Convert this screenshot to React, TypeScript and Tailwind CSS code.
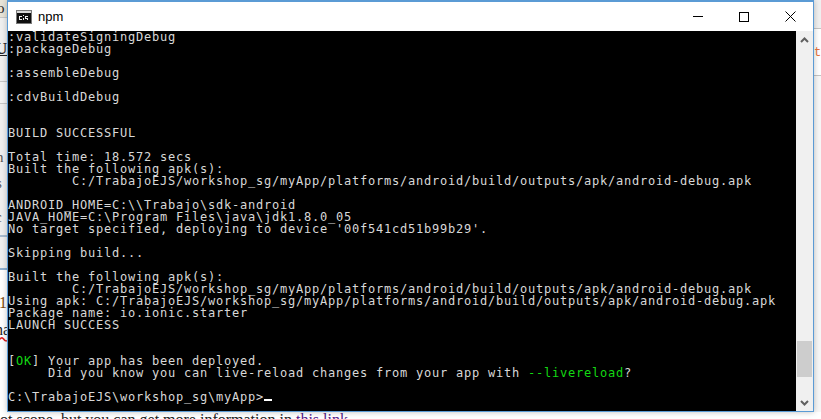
import React from 'react';

const lines: React.ReactNode[] = [
  ':validateSigningDebug',
  ':packageDebug',
  '',
  ':assembleDebug',
  '',
  ':cdvBuildDebug',
  '',
  '',
  'BUILD SUCCESSFUL',
  '',
  'Total time: 18.572 secs',
  'Built the following apk(s):',
  '        C:/TrabajoEJS/workshop_sg/myApp/platforms/android/build/outputs/apk/android-debug.apk',
  '',
  'ANDROID_HOME=C:\\\\Trabajo\\sdk-android',
  'JAVA_HOME=C:\\Program Files\\java\\jdk1.8.0_05',
  "No target specified, deploying to device '00f541cd51b99b29'.",
  '',
  'Skipping build...',
  '',
  'Built the following apk(s):',
  '        C:/TrabajoEJS/workshop_sg/myApp/platforms/android/build/outputs/apk/android-debug.apk',
  'Using apk: C:/TrabajoEJS/workshop_sg/myApp/platforms/android/build/outputs/apk/android-debug.apk',
  'Package name: io.ionic.starter',
  'LAUNCH SUCCESS',
  '',
  '',
  <>[<span className="text-[#13d813]">OK</span>] Your app has been deployed.</>,
  <>
    {'     Did you know you can live-reload changes from your app with '}
    <span className="text-[#13d813]">--livereload</span>?
  </>,
  '',
  <>
    C:\TrabajoEJS\workshop_sg\myApp&gt;
    <span className="inline-block w-2 h-[2px] bg-white align-baseline" />
  </>,
];

const ConsoleIcon = () => (
  <svg width="16" height="14" viewBox="0 0 16 14" shapeRendering="crispEdges">
    <rect x="0" y="0" width="16" height="14" fill="#7a7a7a" />
    <rect x="1" y="1" width="14" height="2" fill="#d8d8d8" />
    <rect x="1" y="3" width="14" height="10" fill="#101010" />
    <path d="M3 6h3v1H3zM3 7h1v2H3zM3 9h3v1H3zM7 8h1v2H7zM7 5h1v1H7zM9 6h3v1H9zM9 7h1v1H9zM9 8h3v1H9zM11 9h1v1h-1z" fill="#f0f0f0" />
  </svg>
);

const LeftEdge = () => (
  <div className="w-[7px] h-full overflow-hidden flex flex-col bg-[#f0f0f0] font-['Liberation_Serif',serif] text-[#222]">
    <div className="h-[17px] bg-[#e8e4d8] text-[15px] leading-[17px] whitespace-nowrap -indent-[3px]">o</div>
    <div className="h-[23px] border-t border-[#c8c8c8]" />
    <div className="h-[18px] text-[17px] leading-[18px] font-bold underline whitespace-nowrap -indent-[5px]">U</div>
    <div className="h-[24px] border-b border-[#c8c8c8]" />
    <div className="h-[22px] border-b border-[#c8c8c8] bg-[#f4f4f4]" />
    <div className="h-[70px] text-[#555] text-[15px] leading-[18px] whitespace-nowrap -indent-[4px] pt-[44px]">n</div>
    <div className="h-[30px] text-[#555] text-[15px] leading-[18px] whitespace-nowrap -indent-[4px]">s</div>
    <div className="h-[33px] text-[#555] text-[15px] leading-[18px] whitespace-nowrap -indent-[5px] pt-[4px] border-b-2 border-[#a9bcd0]">c</div>
    <div className="h-[33px] border-b-2 border-[#8fb0d0]" />
    <div className="h-[48px] bg-white text-[#7a4a10] text-[16px] leading-[18px] whitespace-nowrap pt-[24px] -indent-[1px]">
      1
    </div>
    <div className="flex-1 bg-white text-[#222] text-[16px] leading-[18px] whitespace-nowrap -indent-[5px] pt-[3px]">
      <span className="underline decoration-wavy decoration-[#e02020]">ha</span>
    </div>
  </div>
);

const RightEdge = () => (
  <div className="flex-1 h-full overflow-hidden flex flex-col bg-[#f0f0f0]">
    <div className="h-[29px] border-b border-[#c4c4c4]" />
    <div className="h-[47px] border-b border-[#c4c4c4] bg-white pt-[16px] text-[12px] leading-[16px] whitespace-nowrap font-['Liberation_Mono',monospace] text-[#e8703a]">
      tr
    </div>
    <div className="flex-1 bg-[#f7f7f7]" />
  </div>
);

export default function App() {
  return (
    <div className="relative w-[821px] h-[419px] overflow-hidden flex flex-col bg-white">
      <div className="flex h-[412px]">
        <LeftEdge />
        <div className="w-[807px] h-full flex flex-col border border-t-2 border-[#5b9bd5] bg-white shadow-[0_0_6px_rgba(0,0,0,0.25)] z-10">
          <div className="h-[29px] flex items-center shrink-0">
            <div className="ml-2 mr-[6px] flex items-center">
              <ConsoleIcon />
            </div>
            <span className="font-['Liberation_Sans',sans-serif] text-[13px] text-black">npm</span>
            <div className="ml-auto flex items-center h-full">
              <div className="w-[46px] h-full flex items-center justify-center">
                <div className="w-[10px] h-px bg-black" />
              </div>
              <div className="w-[46px] h-full flex items-center justify-center">
                <div className="w-[10px] h-[10px] border border-black" />
              </div>
              <div className="w-[46px] h-full flex items-center justify-center">
                <svg width="11" height="11" viewBox="0 0 11 11">
                  <path d="M0.5 0.5L10.5 10.5M10.5 0.5L0.5 10.5" stroke="#000" strokeWidth="1" />
                </svg>
              </div>
            </div>
          </div>
          <div className="flex-1 flex min-h-0">
            <div className="w-[788px] bg-black overflow-hidden whitespace-pre font-['DejaVu_Sans_Mono',monospace] text-[12px] tracking-[0.776px] leading-[12px] text-[#d8d8d8]">
              {lines.map((line, i) => (
                <div key={i} className="h-[12px]">
                  {line}
                </div>
              ))}
            </div>
            <div className="flex-1 bg-[#f0f0f0] flex flex-col">
              <div className="h-[17px] flex items-center justify-center">
                <svg width="9" height="6" viewBox="0 0 9 6">
                  <path d="M1 5L4.5 1.5L8 5" fill="none" stroke="#606060" strokeWidth="2" />
                </svg>
              </div>
              <div className="flex-1 flex flex-col justify-end pb-[17px] px-px">
                <div className="h-[36px] bg-[#cdcdcd]" />
              </div>
              <div className="h-[17px] flex items-center justify-center">
                <svg width="9" height="6" viewBox="0 0 9 6">
                  <path d="M1 1L4.5 4.5L8 1" fill="none" stroke="#606060" strokeWidth="2" />
                </svg>
              </div>
            </div>
          </div>
        </div>
        <RightEdge />
      </div>
      <div className="flex-1 overflow-hidden bg-white whitespace-nowrap font-['Liberation_Serif',serif] text-[16px] leading-[16px] text-[#222] -indent-[8px]">
        not scope, but you can get more information in <span className="text-[#551a8b]">this link</span>.
      </div>
    </div>
  );
}
